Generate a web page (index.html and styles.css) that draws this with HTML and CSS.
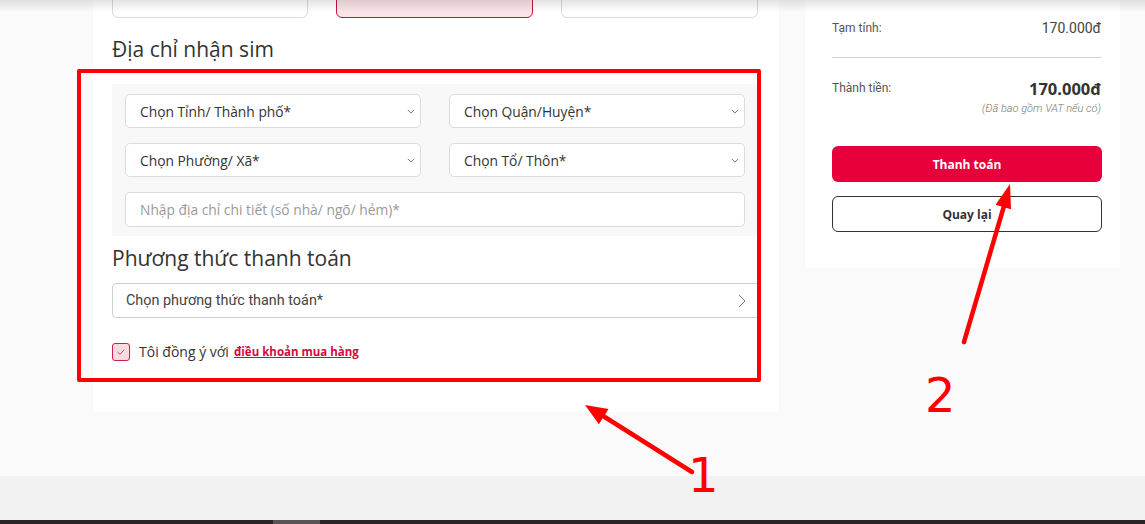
FILE: index.html
```html
<!DOCTYPE html>
<html lang="vi">
<head>
<meta charset="utf-8">
<title>Thanh toán</title>
<link rel="stylesheet" href="styles.css">
</head>
<body>
<div class="page">
  <div class="main">
    <section class="card form-card">
      <div class="type-row">
        <div class="type-box"></div>
        <div class="type-box active"></div>
        <div class="type-box"></div>
      </div>
      <h2 class="sec-title">Địa chỉ nhận sim</h2>
      <div class="addr-panel">
        <div class="addr-grid">
          <div class="select"><span>Chọn Tỉnh/ Thành phố*</span><svg class="chev-down" viewBox="0 0 10 6"><polyline points="1,1 5,5 9,1"/></svg></div>
          <div class="select"><span>Chọn Quận/Huyện*</span><svg class="chev-down" viewBox="0 0 10 6"><polyline points="1,1 5,5 9,1"/></svg></div>
          <div class="select"><span>Chọn Phường/ Xã*</span><svg class="chev-down" viewBox="0 0 10 6"><polyline points="1,1 5,5 9,1"/></svg></div>
          <div class="select"><span>Chọn Tổ/ Thôn*</span><svg class="chev-down" viewBox="0 0 10 6"><polyline points="1,1 5,5 9,1"/></svg></div>
        </div>
        <div class="text-input">Nhập địa chỉ chi tiết (số nhà/ ngõ/ hẻm)*</div>
      </div>
      <h2 class="sec-title pay-title">Phương thức thanh toán</h2>
      <div class="pay-select"><span>Chọn phương thức thanh toán*</span><svg class="chev-right" viewBox="0 0 8 14"><polyline points="1,1 7,7 1,13"/></svg></div>
      <div class="agree">
        <span class="check"><svg viewBox="0 0 18 18"><polyline points="5,9 8,11.5 12.5,6.5"/></svg></span>
        <span class="agree-text">Tôi đồng ý với</span>
        <a class="agree-link" href="#">điều khoản mua hàng</a>
      </div>
    </section>
    <aside class="card sum-card">
      <div class="sum-row">
        <span class="sum-label">Tạm tính:</span>
        <span class="sum-val">170.000đ</span>
      </div>
      <div class="divider"></div>
      <div class="sum-row total-row">
        <span class="sum-label">Thành tiền:</span>
        <div class="total-val">
          <strong>170.000đ</strong>
          <em>(Đã bao gồm VAT nếu có)</em>
        </div>
      </div>
      <button class="btn btn-primary">Thanh toán</button>
      <button class="btn btn-outline">Quay lại</button>
    </aside>
  </div>
  <div class="footer"></div>
  <div class="taskbar"><span class="task-seg"></span></div>

  <div class="top-shadow"></div>
  <div class="mark-box"></div>
  <svg class="arrows" viewBox="0 0 1145 524">
    <line x1="692" y1="472" x2="600" y2="414"/>
    <polygon points="585,405 598.9,424.3 608.5,409.1"/>
    <line x1="964" y1="342" x2="1004" y2="206"/>
    <polygon points="1010,184 995.6,204.8 1011,209.2"/>
  </svg>
  <span class="num num1">1</span>
  <span class="num num2">2</span>
</div>
</body>
</html>
```

FILE: styles.css
```css
* { box-sizing: border-box; }

html, body {
  margin: 0;
  padding: 0;
}

body {
  background: #fafafa;
  font-family: "Open Sans", "Noto Sans", sans-serif;
  color: #333;
}

.page {
  position: relative;
  width: 1145px;
  height: 524px;
  overflow: hidden;
  background: #fafafa;
}

.main {
  display: flex;
  align-items: flex-start;
  gap: 26px;
  height: 476px;
  padding-left: 93px;
}

.card {
  background: #fff;
}

/* ---------- left form card ---------- */
.form-card {
  width: 686px;
  height: 412px;
  padding: 0 21px 0 19px;
}

.type-row {
  display: grid;
  grid-template-columns: 196px 197px 197px;
  column-gap: 28px;
  margin-top: -27px;
}

.type-box {
  height: 45px;
  border: 1px solid #d8d8d8;
  border-radius: 6px;
  background: #fff;
}

.type-box.active {
  border-color: #c8143c;
  background: #fbe3e8;
}

.sec-title {
  margin: 17px 0 0;
  font-size: 21px;
  line-height: 28px;
  font-weight: 500;
  color: #333;
}

.addr-panel {
  margin-top: 21px;
  padding: 10px 13px 9px;
  background: #f8f8f8;
}

.addr-grid {
  display: grid;
  grid-template-columns: 1fr 1fr;
  column-gap: 28px;
  row-gap: 15px;
}

.select {
  display: flex;
  align-items: center;
  justify-content: space-between;
  height: 34px;
  padding: 0 5px 0 14px;
  background: #fff;
  border: 1px solid #dcdcdc;
  border-radius: 5px;
  font-size: 13.8px;
  color: #333;
}

.chev-down {
  width: 8px;
  height: 5px;
  fill: none;
  stroke: #666;
  stroke-width: 1.1;
}

.text-input {
  display: flex;
  align-items: center;
  height: 35px;
  margin-top: 15px;
  padding-left: 14px;
  background: #fff;
  border: 1px solid #dcdcdc;
  border-radius: 5px;
  font-size: 13.8px;
  color: #9a9a9a;
}

.pay-title {
  margin-top: 8px;
}

.pay-select {
  display: flex;
  align-items: center;
  justify-content: space-between;
  height: 35px;
  margin-top: 11px;
  margin-right: -3px;
  padding: 0 14px 0 13px;
  border: 1px solid #cfcfcf;
  border-radius: 4px;
  font-family: Roboto, "Open Sans", sans-serif;
  font-size: 14.4px;
  color: #444;
}

.chev-right {
  width: 8px;
  height: 14px;
  fill: none;
  stroke: #777;
  stroke-width: 1;
}

.agree {
  display: flex;
  align-items: center;
  margin-top: 24px;
}

.check {
  display: flex;
  width: 18px;
  height: 18px;
  border: 1px solid #d21e46;
  border-radius: 3px;
  background: #fadbe2;
}

.check svg {
  width: 16px;
  height: 16px;
  fill: none;
  stroke: #c0455e;
  stroke-width: 1;
}

.agree-text {
  margin-left: 9px;
  font-size: 14px;
  color: #333;
}

.agree-link {
  margin-left: 5px;
  font-size: 11.5px;
  font-weight: 700;
  color: #d4093b;
  text-decoration: underline;
}

/* ---------- right summary card ---------- */
.sum-card {
  width: 315px;
  height: 268px;
  padding: 20px 19px 0 27px;
  font-family: Roboto, "Noto Sans", sans-serif;
}

.sum-row {
  display: flex;
  justify-content: space-between;
  align-items: flex-start;
}

.sum-label {
  font-size: 12px;
  line-height: 16px;
  color: #555;
}

.sum-val {
  font-size: 14px;
  line-height: 16px;
  color: #444;
}

.divider {
  height: 1px;
  margin-top: 21px;
  background: #d2d2d2;
}

.total-row {
  margin-top: 22px;
}

.total-val {
  display: flex;
  flex-direction: column;
  align-items: flex-end;
}

.total-val strong {
  margin-top: -2px;
  font-family: "Open Sans", sans-serif;
  font-size: 16.5px;
  line-height: 22px;
  font-weight: 700;
  color: #333;
}

.total-val em {
  margin-top: 2px;
  font-size: 11px;
  line-height: 14px;
  font-weight: 300;
  color: #777;
}

.btn {
  display: block;
  width: 270px;
  height: 36px;
  border-radius: 6px;
  font-family: "Open Sans", sans-serif;
  font-size: 12px;
  font-weight: 700;
  cursor: pointer;
}

.btn-primary {
  margin-top: 30px;
  border: none;
  background: #e8003d;
  color: #fff;
}

.btn-outline {
  margin-top: 14px;
  border: 1px solid #333;
  background: #fff;
  color: #333;
}

/* ---------- footer ---------- */
.footer {
  height: 44px;
  background: #f2f2f2;
}

.taskbar {
  height: 4px;
  background: #2a2525;
  padding-left: 273px;
}

.task-seg {
  display: block;
  width: 47px;
  height: 4px;
  background: #5a5555;
}

/* ---------- overlays ---------- */
.top-shadow {
  position: absolute;
  left: 0;
  top: 0;
  width: 100%;
  height: 12px;
  background: linear-gradient(to bottom, rgba(0,0,0,0.11), rgba(0,0,0,0));
  pointer-events: none;
}

.mark-box {
  position: absolute;
  left: 77px;
  top: 69px;
  width: 684px;
  height: 313px;
  border: 4px solid #f00;
  border-radius: 2px;
  pointer-events: none;
}

.arrows {
  position: absolute;
  left: 0;
  top: 0;
  width: 1145px;
  height: 524px;
  pointer-events: none;
}

.arrows line {
  stroke: #f00;
  stroke-width: 4.5;
  stroke-linecap: round;
}

.arrows polygon {
  fill: #f00;
}

.num {
  position: absolute;
  font-family: "DejaVu Sans", sans-serif;
  font-size: 48px;
  line-height: 48px;
  color: #f00;
}

.num1 {
  left: 688px;
  top: 451px;
}

.num2 {
  left: 925px;
  top: 371px;
}
```
